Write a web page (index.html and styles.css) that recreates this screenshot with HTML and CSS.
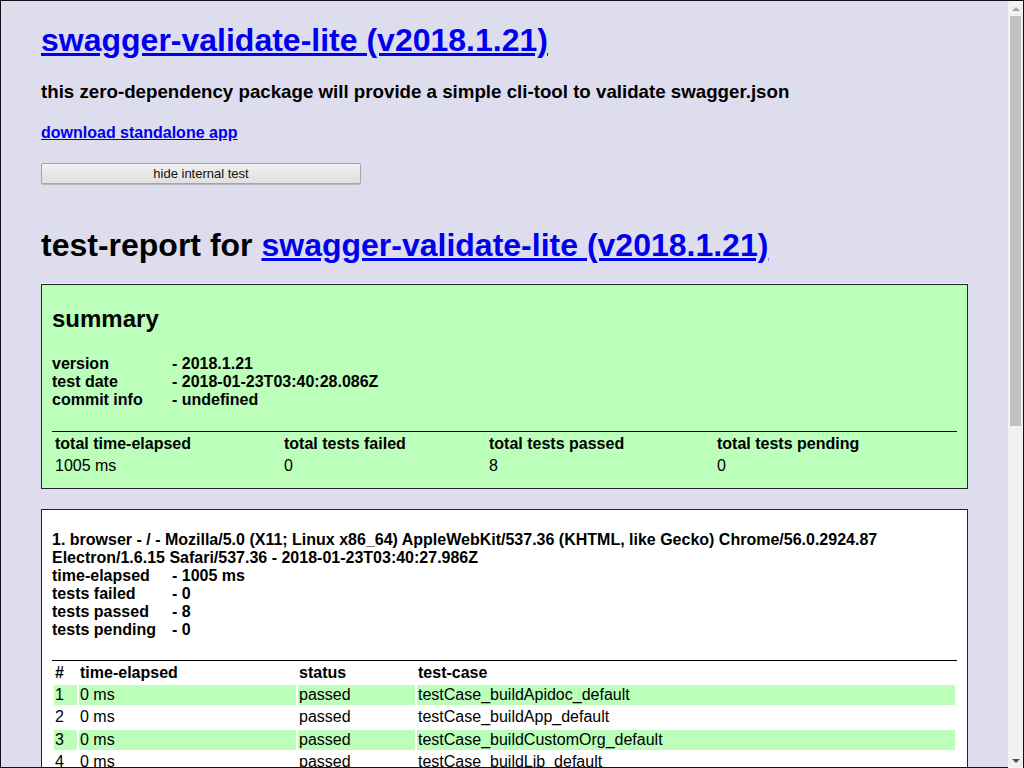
FILE: index.html
```html
<!DOCTYPE html>
<html>
<head>
<meta charset="utf-8">
<title>swagger-validate-lite (v2018.1.21)</title>
<link rel="stylesheet" href="styles.css">
</head>
<body>
<div class="viewport">
  <div class="content">
    <div class="page">
      <h1 class="title"><a href="#">swagger-validate-lite (v2018.1.21)</a></h1>
      <h3 class="desc">this zero-dependency package will provide a simple cli-tool to validate swagger.json</h3>
      <h4 class="download"><a href="#">download standalone app</a></h4>
      <button class="btn" type="button">hide internal test</button>
      <h1 class="report-title">test-report for <a href="#">swagger-validate-lite (v2018.1.21)</a></h1>

      <div class="box summary">
        <h2 class="box-title">summary</h2>
        <h4 class="info summary-info">
          <span class="label">version</span>- 2018.1.21<br>
          <span class="label">test date</span>- 2018-01-23T03:40:28.086Z<br>
          <span class="label">commit info</span>- undefined
        </h4>
        <table class="report-table">
          <thead>
            <tr>
              <th class="s1">total time-elapsed</th>
              <th class="s2">total tests failed</th>
              <th class="s3">total tests passed</th>
              <th>total tests pending</th>
            </tr>
          </thead>
          <tbody>
            <tr>
              <td>1005 ms</td>
              <td>0</td>
              <td>8</td>
              <td>0</td>
            </tr>
          </tbody>
        </table>
      </div>

      <div class="box platform">
        <h4 class="info platform-info">
          1. browser - / - Mozilla/5.0 (X11; Linux x86_64) AppleWebKit/537.36 (KHTML, like Gecko) Chrome/56.0.2924.87 Electron/1.6.15 Safari/537.36 - 2018-01-23T03:40:27.986Z<br>
          <span class="label">time-elapsed</span>- 1005 ms<br>
          <span class="label">tests failed</span>- 0<br>
          <span class="label">tests passed</span>- 8<br>
          <span class="label">tests pending</span>- 0
        </h4>
        <table class="report-table cases">
          <thead>
            <tr>
              <th class="c1">#</th>
              <th class="c2">time-elapsed</th>
              <th class="c3">status</th>
              <th>test-case</th>
            </tr>
          </thead>
          <tbody>
            <tr class="odd"><td>1</td><td>0 ms</td><td>passed</td><td>testCase_buildApidoc_default</td></tr>
            <tr><td>2</td><td>0 ms</td><td>passed</td><td>testCase_buildApp_default</td></tr>
            <tr class="odd"><td>3</td><td>0 ms</td><td>passed</td><td>testCase_buildCustomOrg_default</td></tr>
            <tr><td>4</td><td>0 ms</td><td>passed</td><td>testCase_buildLib_default</td></tr>
            <tr class="odd"><td>5</td><td>0 ms</td><td>passed</td><td>testCase_buildReadme_default</td></tr>
            <tr><td>6</td><td>0 ms</td><td>passed</td><td>testCase_buildTest_default</td></tr>
            <tr class="odd"><td>7</td><td>0 ms</td><td>passed</td><td>testCase_validateFile_default</td></tr>
            <tr><td>8</td><td>0 ms</td><td>passed</td><td>testCase_webpage_default</td></tr>
          </tbody>
        </table>
      </div>
    </div>
  </div>
  <div class="scrollbar" aria-hidden="true">
    <div class="sb-btn"><span class="arrow-up"></span></div>
    <div class="sb-track">
      <div class="sb-thumb"></div>
    </div>
    <div class="sb-btn"><span class="arrow-down"></span></div>
  </div>
</div>
</body>
</html>
```
FILE: styles.css
```css
html, body {
  margin: 0;
  padding: 0;
  height: 100%;
  overflow: hidden;
}

body {
  background: #dde;
  font-family: "Liberation Sans", Arial, Helvetica, sans-serif;
  color: #000;
}

.viewport {
  display: flex;
  height: 100vh;
  box-sizing: border-box;
  border-top: 1px solid #111;
  border-left: 1px solid #111;
  border-right: 1px solid #111;
  background: #dde;
}

.content {
  flex: 1;
  min-width: 0;
  overflow: hidden;
  border-bottom: 1px solid #111;
}

.page {
  margin: 0 40px;
  padding-bottom: 20px;
}

a {
  color: #00e;
  text-decoration: underline;
}

.title {
  font-size: 32px;
  margin: 21px 0 22px;
}

.desc {
  font-size: 18.72px;
  margin: 18.72px 0;
}

.download {
  font-size: 16px;
  margin: 21.28px 0 20.5px;
}

.btn {
  display: block;
  width: 320px;
  height: 21px;
  padding: 0 6px;
  font-family: "Liberation Sans", Arial, sans-serif;
  font-size: 13px;
  color: #111;
  background: linear-gradient(#f0f0f0, #e0e0e0);
  border: 1px solid #a6a6a6;
  border-radius: 2px;
  box-shadow: 0 1px 0 #b8b8c4;
}

.report-title {
  font-size: 32px;
  margin: 43px 0 20px;
}

.box {
  border: 1px solid #222;
  margin-top: 20px;
  padding: 0 10px 10px 10px;
}

.summary {
  background: #bfb;
  box-shadow: 0 -1px 0 #f4f4f8;
  padding-bottom: 9px;
}

.platform {
  background: #fff;
}

.box-title {
  font-size: 24px;
  margin: 20.5px 0 19.92px;
}

.info {
  font-size: 16px;
  margin: 21.28px 0;
}

.summary-info {
  margin-bottom: 22.28px;
}

.platform-info {
  margin: 21px 0 21px;
}

.label {
  display: inline-block;
  width: 120px;
}

.report-table {
  width: 100%;
  border-top: 1px solid #000;
  border-spacing: 2px;
  text-align: left;
  font-size: 16px;
}

.report-table th,
.report-table td {
  padding: 1px;
  line-height: 18.4px;
  vertical-align: middle;
}

.report-table th {
  font-weight: bold;
}

.s1 { width: 225px; }
.s2 { width: 201px; }
.s3 { width: 224px; }

.c1 { width: 21px; }
.c2 { width: 215px; }
.c3 { width: 115px; }

.cases .odd td {
  background: #bfb;
}

/* scrollbar column */
.scrollbar {
  flex: none;
  width: 15px;
  display: flex;
  flex-direction: column;
  background: #f1f1f1;
}

.sb-btn {
  flex: none;
  height: 15px;
  display: flex;
  align-items: center;
  justify-content: center;
}

.arrow-up {
  width: 0;
  height: 0;
  border-left: 4px solid transparent;
  border-right: 4px solid transparent;
  border-bottom: 4px solid #a3a3a3;
}

.arrow-down {
  width: 0;
  height: 0;
  border-left: 4px solid transparent;
  border-right: 4px solid transparent;
  border-top: 4px solid #505050;
}

.sb-track {
  flex: 1;
  padding: 0 2px;
}

.sb-thumb {
  height: 410px;
  background: #c1c1c1;
}
```
